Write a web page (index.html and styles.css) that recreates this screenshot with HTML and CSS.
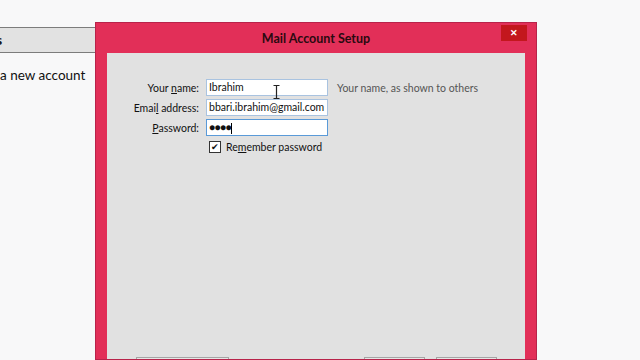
FILE: index.html
```html
<!DOCTYPE html>
<html lang="en">
<head>
    <meta charset="UTF-8">
    <title>Mail Account Setup</title>
    <link rel="stylesheet" href="styles.css">
</head>
<body>
    <div class="app-window">
        <div class="app-header">s</div>
        <p class="app-text">a new account</p>
    </div>

    <div class="dialog">
        <div class="dialog-title">
            <span>Mail Account Setup</span>
            <button class="close-btn">&#x2715;</button>
        </div>
        <div class="dialog-body">
            <div class="form-grid">
                <label>Your <u>n</u>ame:</label>
                <div class="field">Ibrahim</div>
                <span class="hint">Your name, as shown to others</span>

                <label>Emai<u>l</u> address:</label>
                <div class="field">bbari.ibrahim@gmail.com</div>
                <span></span>

                <label><u>P</u>assword:</label>
                <div class="field focused">&#9679;&#9679;&#9679;&#9679;<span class="caret"></span></div>
                <span></span>

                <span></span>
                <div class="check-row">
                    <span class="checkbox">&#10004;</span>
                    <span>Re<u>m</u>ember password</span>
                </div>
                <span></span>
            </div>

            <div class="button-row">
                <button class="btn wide"></button>
                <span class="spacer"></span>
                <button class="btn"></button>
                <button class="btn"></button>
            </div>

            <!-- mouse pointer over the name field -->
            <svg class="ibeam" width="7" height="14" viewBox="0 0 7 14">
                <path d="M0.5 0.5h6M3.5 0.5v13M0.5 13.5h6" stroke="#222" stroke-width="1.2" fill="none"/>
            </svg>
        </div>
    </div>
</body>
</html>
```

FILE: styles.css
```css
body {
    margin: 0;
    width: 640px;
    height: 360px;
    overflow: hidden;
    background-color: #f8f8f9;
    font-family: Lato, "Open Sans", sans-serif;
    color: #111;
    position: relative;
}

.app-window {
    padding-top: 27px;
}

.app-header {
    height: 24px;
    width: 110px;
    background-color: #e2e2e2;
    border-top: 1px solid #7c7c7c;
    border-bottom: 1px solid #7c7c7c;
    font-weight: bold;
    font-size: 14px;
    line-height: 24px;
    margin-left: -4px;
}

.app-text {
    margin: 14px 0 0 0;
    font-size: 13.5px;
}

.dialog {
    position: absolute;
    left: 95px;
    top: 22px;
    width: 440px;
    height: 336px;
    overflow: hidden;
    background-color: #e22f58;
    border: 1px solid #b8234a;
}

.dialog-title {
    height: 30px;
    display: flex;
    justify-content: center;
    align-items: center;
    position: relative;
    font-size: 12.5px;
    font-weight: bold;
    color: #2a0a10;
}

.close-btn {
    position: absolute;
    right: 9px;
    top: 2px;
    width: 26px;
    height: 16px;
    border: none;
    padding: 0;
    background-color: #c3171d;
    color: #fff;
    font-size: 9px;
    font-weight: bold;
    line-height: 16px;
}

.dialog-body {
    position: relative;
    margin: 0 11px;
    height: 330px;
    background-color: #e1e1e1;
    padding-top: 26px;
    box-sizing: border-box;
    display: flex;
    flex-direction: column;
    font-size: 10.5px;
}

.form-grid {
    display: grid;
    grid-template-columns: 92px 122px auto;
    column-gap: 7px;
    row-gap: 3px;
    align-items: center;
}

.form-grid label {
    text-align: right;
}

.field {
    height: 15px;
    border: 1px solid #a9c3e0;
    background-color: #fff;
    padding-left: 2px;
    line-height: 15px;
    white-space: nowrap;
    overflow: hidden;
}

.field.focused {
    border-color: #5a9ad8;
    letter-spacing: -0.5px;
    font-size: 10px;
}

.caret {
    display: inline-block;
    width: 1px;
    height: 11px;
    background-color: #000;
    vertical-align: middle;
    margin-left: 0;
}

.hint {
    color: #555;
    padding-left: 2px;
    white-space: nowrap;
}

.check-row {
    display: flex;
    align-items: center;
    gap: 5px;
    margin-top: 2px;
    padding-left: 3px;
    white-space: nowrap;
}

.checkbox {
    width: 10px;
    height: 10px;
    border: 1px solid #333;
    background-color: #fff;
    font-size: 9px;
    line-height: 10px;
    text-align: center;
}

.button-row {
    margin-top: auto;
    margin-bottom: 3px;
    display: flex;
    gap: 11px;
    padding: 0 28px 0 29px;
}

.spacer {
    flex: 1;
}

.btn {
    height: 23px;
    width: 61px;
    background-color: #e6e6e6;
    border: 1px solid #a5a5a5;
}

.btn.wide {
    width: 93px;
}

.ibeam {
    position: absolute;
    left: 166px;
    top: 32px;
}
```
